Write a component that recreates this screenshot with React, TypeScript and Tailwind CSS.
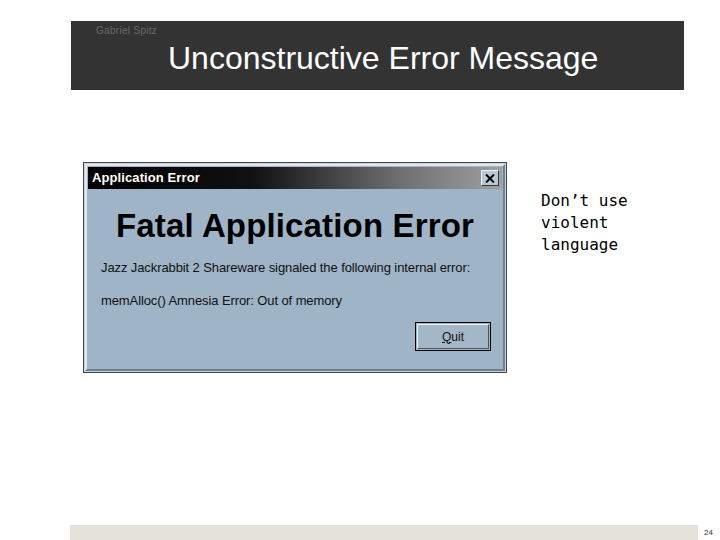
import React from 'react'

const sans = { fontFamily: '"Liberation Sans", Arial, sans-serif' }

function ErrorDialog() {
    return (
        <div className="w-[424px] h-[211px] border border-[#3c4650] bg-[#c9d4dd] p-[1px]">
            <div className="h-full w-full border-[2px] border-t-[#dfe6ec] border-l-[#dfe6ec] border-r-[#6f7f8c] border-b-[#6f7f8c] bg-[#9fb4c6] flex flex-col">
                {/* title bar */}
                <div className="mx-[1px] mt-[1px] h-[22px] flex items-center justify-between pl-[4px] pr-[3px] bg-[linear-gradient(90deg,#000000_0%,#111111_40%,#6e6e6e_75%,#a0a0a0_100%)]">
                    <span className="text-white text-[13px] font-bold tracking-[0.1px]">Application Error</span>
                    <div className="w-[18px] h-[16px] bg-[#b8c8d6] border border-t-[#eef2f5] border-l-[#eef2f5] border-r-[#303840] border-b-[#303840] flex items-center justify-center">
                        <svg width="10" height="9" viewBox="0 0 10 9">
                            <path d="M1 0.5 L9 8.5 M9 0.5 L1 8.5" stroke="#000" strokeWidth="2" />
                        </svg>
                    </div>
                </div>
                <div className="text-center text-[33px] font-bold text-black leading-none mt-[20px] tracking-[0.15px]">
                    Fatal Application Error
                </div>
                <div className="pl-[14px] mt-[16px] text-[13px] text-[#101010] tracking-[-0.1px]">
                    Jazz Jackrabbit 2 Shareware signaled the following internal error:
                </div>
                <div className="pl-[14px] mt-[13px] text-[13px] text-[#101010] tracking-[-0.1px]">
                    memAlloc() Amnesia Error: Out of memory
                </div>
                <div className="flex justify-end pr-[12px] mt-[12px]">
                    <div className="w-[76px] h-[29px] border border-black p-[1px]">
                        <div className="h-full w-full border border-t-[#f2f5f8] border-l-[#f2f5f8] border-r-[#4b5863] border-b-[#4b5863] bg-[#a3b7c8] flex items-center justify-center text-[12px] text-[#101010]">
                            <span><span className="underline">Q</span>uit</span>
                        </div>
                    </div>
                </div>
            </div>
        </div>
    )
}

export default function App() {
    return (
        <div className="w-[720px] h-[540px] bg-white flex flex-col overflow-hidden" style={sans}>
            {/* header band */}
            <div className="ml-[71px] mt-[21px] w-[613px] h-[69px] bg-[#333333] flex flex-col">
                <div className="pl-[25px] pt-[5px] text-[10px] leading-none text-[#6a6a6a] tracking-[0.3px]">Gabriel Spitz</div>
                <div className="pl-[97px] mt-[6px] text-[32px] leading-none text-white">Unconstructive Error Message</div>
            </div>

            {/* slide body */}
            <div className="flex mt-[72px] ml-[83px]">
                <ErrorDialog />
                <div
                    className="ml-[34px] mt-[28px] text-[16px] leading-[22px] text-black"
                    style={{ fontFamily: '"DejaVu Sans Mono", "Liberation Mono", monospace' }}
                >
                    Don’t use<br />violent<br />language
                </div>
            </div>

            {/* footer */}
            <div className="mt-auto flex items-center h-[15px]">
                <div className="ml-[70px] w-[628px] h-full bg-[#e3e3dc]" />
                <span className="ml-[6px] text-[8px] text-[#333]">24</span>
            </div>
        </div>
    )
}
